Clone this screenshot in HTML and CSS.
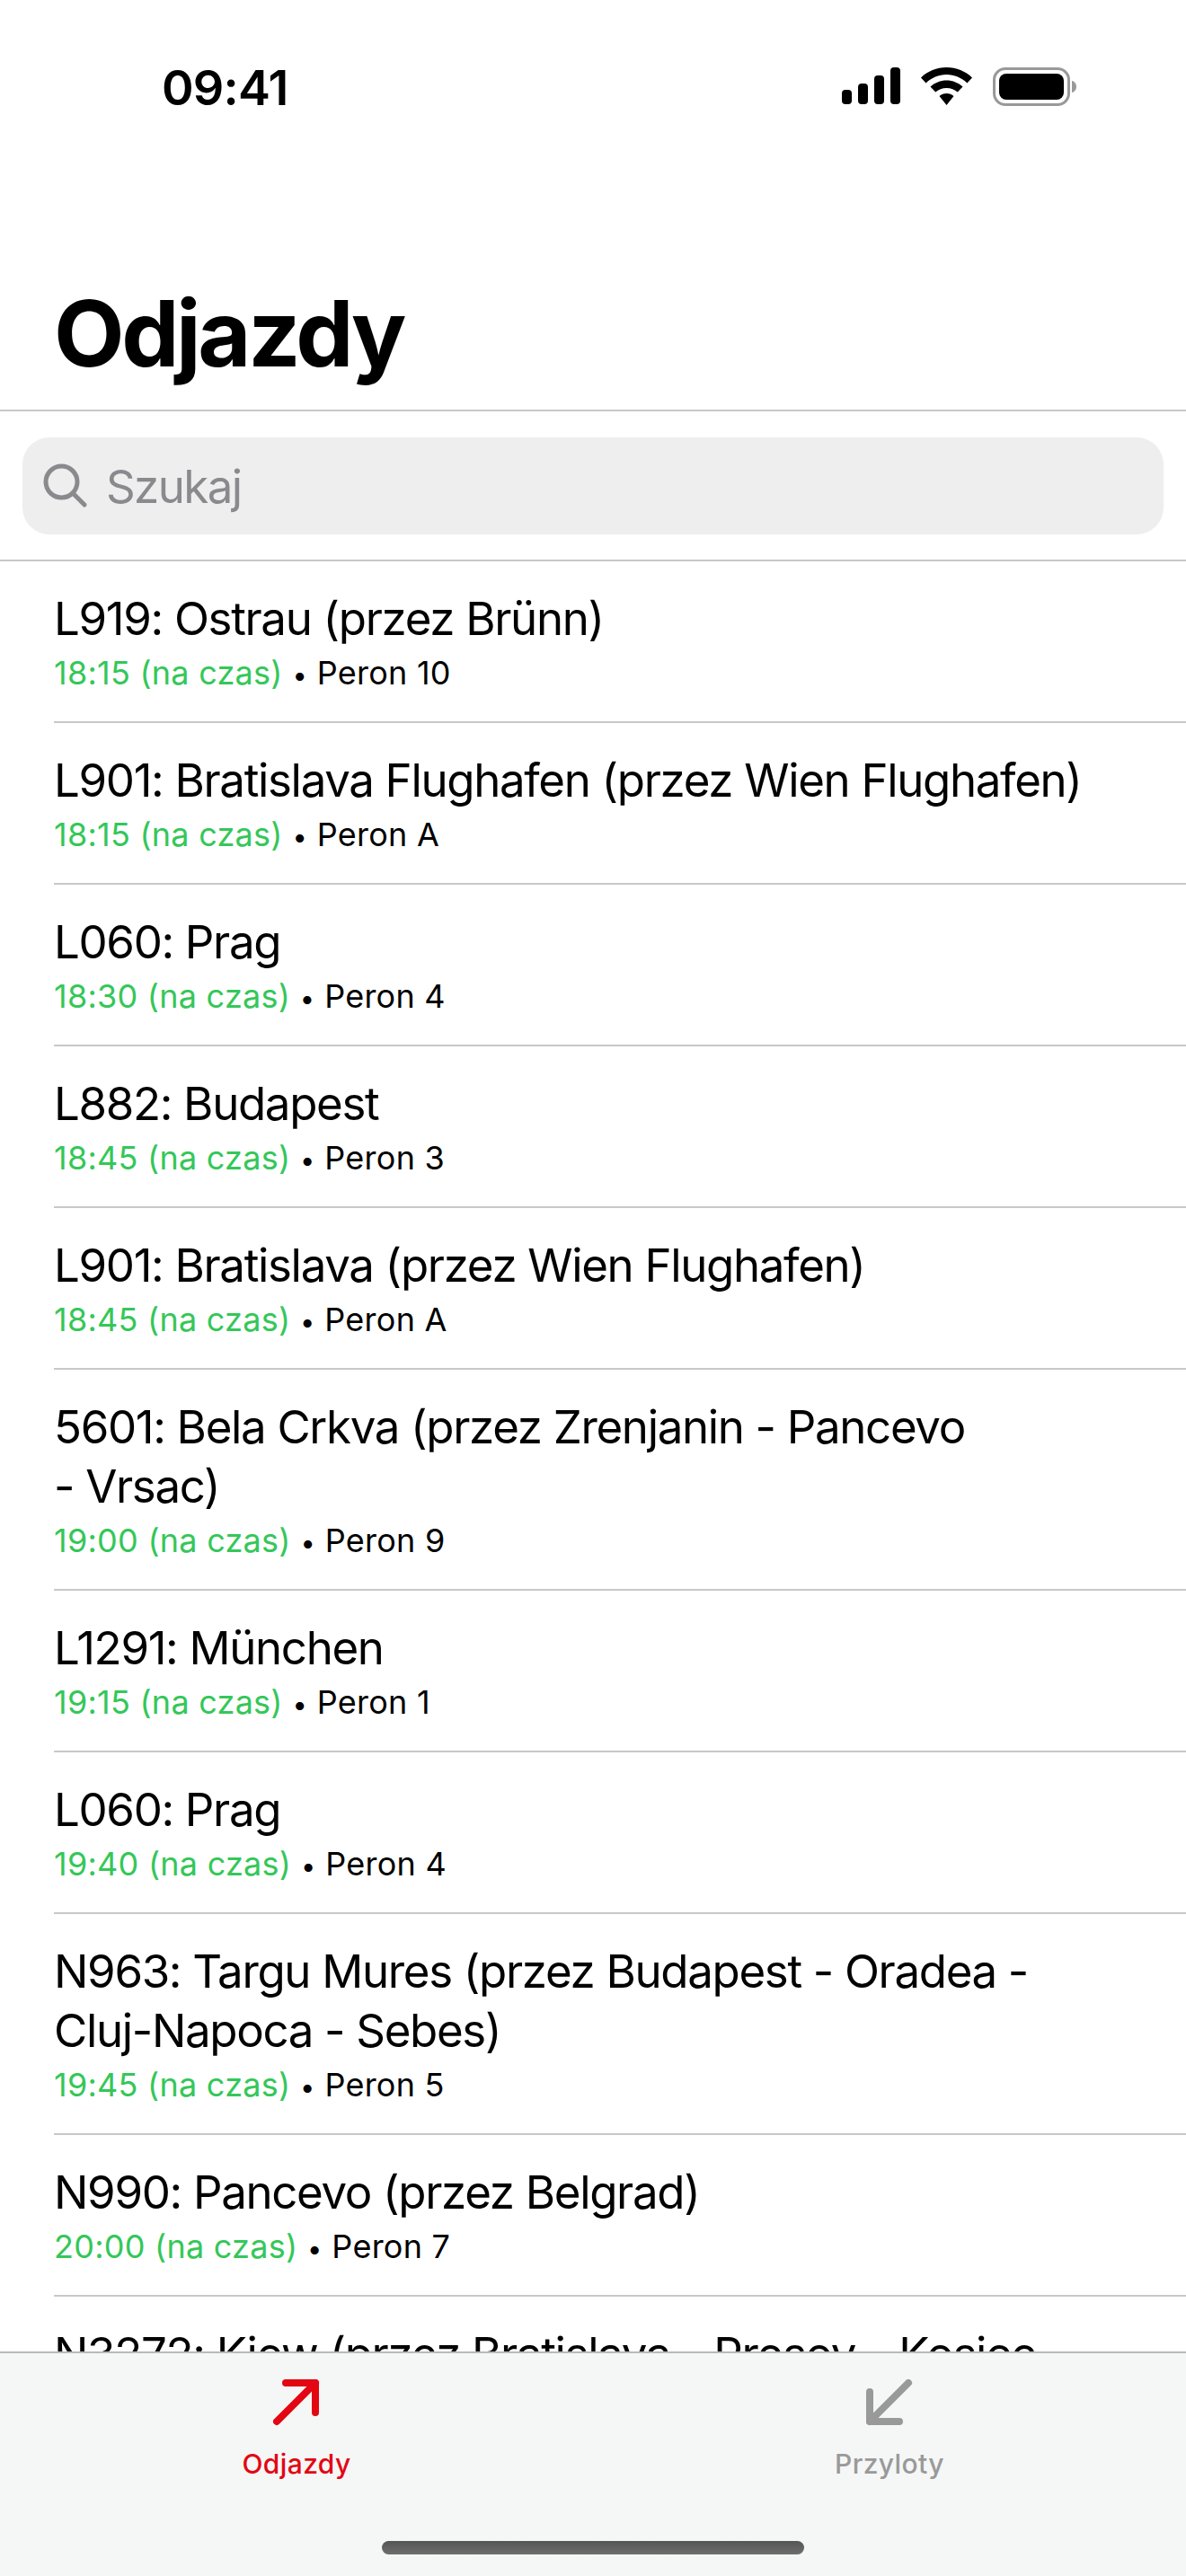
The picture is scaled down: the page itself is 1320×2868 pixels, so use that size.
FILE: index.html
```html
<!DOCTYPE html>
<html lang="pl">
<head>
<meta charset="utf-8">
<title>Odjazdy</title>
<link rel="stylesheet" href="styles.css">
</head>
<body>
<div class="app">
  <header class="status">
    <span class="clock">09:41</span>
    <div class="status-icons">
      <svg class="signal" width="65" height="41" viewBox="0 0 65 41"><rect x="0" y="25" width="11" height="16" rx="4"/><rect x="18" y="18" width="11" height="23" rx="4"/><rect x="36" y="9" width="11" height="32" rx="4"/><rect x="54" y="0" width="11" height="41" rx="4"/></svg>
      <svg class="wifi" width="57" height="42" viewBox="0 0 57 42"><path d="M28.5 0C17.5 0 7.5 4.3 0 11.4l5.6 6C11.7 11.6 19.7 8 28.5 8s16.8 3.6 22.9 9.4l5.6-6C49.5 4.3 39.5 0 28.5 0z"/><path d="M28.5 14.5c-6.9 0-13.200 2.700-18 7l5.700 6.100c3.200-2.900 7.500-4.700 12.300-4.700s9.100 1.800 12.300 4.700l5.700-6.100c-4.800-4.300-11.100-7-18-7z"/><path d="M28.500 29c-3.100 0-5.900 1.200-8 3.100L28.500 42l8-9.900c-2.100-1.900-4.900-3.100-8-3.100z"/></svg>
      <svg class="battery" width="93" height="43" viewBox="0 0 93 43"><rect x="1.500" y="1.500" width="83" height="40" rx="12.500" fill="none" stroke="#999" stroke-width="3"/><rect x="7" y="7" width="72" height="29" rx="8"/><path d="M88 15c3 .6 5 3.300 5 6.500s-2 5.900-5 6.500z" fill="#999"/></svg>
    </div>
  </header>
  <h1 class="title">Odjazdy</h1>
  <div class="search-wrap">
    <div class="search">
      <svg class="search-icon" width="50" height="50" viewBox="0 0 50 50" fill="none" stroke="#8a8a8e" stroke-width="5" stroke-linecap="round"><circle cx="20.500" cy="20.500" r="17.500"/><line x1="33" y1="33" x2="46" y2="46"/></svg>
      <span class="search-text">Szukaj</span>
    </div>
  </div>
  <main class="list">
    <div class="row"><div class="name">L919: Ostrau (przez Brünn)</div><div class="meta"><span class="time">18:15 (na czas)</span><span class="dot">•</span><span>Peron 10</span></div></div>
    <div class="row"><div class="name">L901: Bratislava Flughafen (przez Wien Flughafen)</div><div class="meta"><span class="time">18:15 (na czas)</span><span class="dot">•</span><span>Peron A</span></div></div>
    <div class="row"><div class="name">L060: Prag</div><div class="meta"><span class="time">18:30 (na czas)</span><span class="dot">•</span><span>Peron 4</span></div></div>
    <div class="row"><div class="name">L882: Budapest</div><div class="meta"><span class="time">18:45 (na czas)</span><span class="dot">•</span><span>Peron 3</span></div></div>
    <div class="row"><div class="name">L901: Bratislava (przez Wien Flughafen)</div><div class="meta"><span class="time">18:45 (na czas)</span><span class="dot">•</span><span>Peron A</span></div></div>
    <div class="row"><div class="name">5601: Bela Crkva (przez Zrenjanin - Pancevo<br>- Vrsac)</div><div class="meta"><span class="time">19:00 (na czas)</span><span class="dot">•</span><span>Peron 9</span></div></div>
    <div class="row"><div class="name">L1291: München</div><div class="meta"><span class="time">19:15 (na czas)</span><span class="dot">•</span><span>Peron 1</span></div></div>
    <div class="row"><div class="name">L060: Prag</div><div class="meta"><span class="time">19:40 (na czas)</span><span class="dot">•</span><span>Peron 4</span></div></div>
    <div class="row"><div class="name">N963: Targu Mures (przez Budapest - Oradea -<br>Cluj-Napoca - Sebes)</div><div class="meta"><span class="time">19:45 (na czas)</span><span class="dot">•</span><span>Peron 5</span></div></div>
    <div class="row"><div class="name">N990: Pancevo (przez Belgrad)</div><div class="meta"><span class="time">20:00 (na czas)</span><span class="dot">•</span><span>Peron 7</span></div></div>
    <div class="row"><div class="name">N3272: Kiew (przez Bratislava - Presov - Kosice</div></div>
  </main>
  <footer class="tabbar">
    <div class="tabs">
      <div class="tab tab-active">
        <svg width="52" height="52" viewBox="0 0 52 52" fill="none" stroke="currentColor" stroke-width="8" stroke-linecap="round" stroke-linejoin="round"><path d="M4 47L47 4"/><path d="M14 4H47V37"/></svg>
        <span class="tab-label">Odjazdy</span>
      </div>
      <div class="tab">
        <svg width="52" height="52" viewBox="0 0 52 52" fill="none" stroke="currentColor" stroke-width="8" stroke-linecap="round" stroke-linejoin="round"><path d="M47 4L4 47"/><path d="M4 14V47H37"/></svg>
        <span class="tab-label">Przyloty</span>
      </div>
    </div>
    <div class="home"></div>
  </footer>
</div>
</body>
</html>
```
FILE: styles.css
```css
* { box-sizing: border-box; margin: 0; padding: 0; }
html, body { background: #fff; }
body { font-family: Inter, "Liberation Sans", sans-serif; color: #000; }
.app { width: 1320px; height: 2868px; display: flex; flex-direction: column; overflow: hidden; }
.status { height: 196px; flex: none; padding: 75px 122px 0 180px; display: flex; justify-content: space-between; align-items: flex-start; }
.clock { font-size: 54px; font-weight: 600; line-height: 44px; letter-spacing: -0.8px; margin-top: 1px; }
.status-icons { display: flex; align-items: flex-start; gap: 23px; }
.title { flex: none; height: 262px; padding: 113px 0 0 60px; font-size: 102px; font-weight: 700; line-height: 124px; letter-spacing: -3.4px; border-bottom: 2px solid #c8c8ca; }
.search-wrap { flex: none; height: 167px; padding: 29px 25px 0; border-bottom: 2px solid #c8c8ca; }
.search { height: 108px; background: #eeeeef; border-radius: 30px; display: flex; align-items: center; padding-left: 23px; gap: 20px; }
.search-icon { flex: none; }
.search-text { font-size: 51px; color: #8a8a8e; letter-spacing: -1.6px; }
.list { flex: 1; min-height: 0; overflow: hidden; padding-left: 60px; }
.row { padding: 31px 0 32px; border-bottom: 2px solid #c8c8ca; }
.name { font-size: 51px; line-height: 66px; letter-spacing: -1.33px; }
.meta { font-size: 36px; height: 44px; line-height: 44px; display: flex; align-items: baseline; margin-top: 5px; letter-spacing: 0.25px; }
.time { color: #34c759; }
.dot { width: 38px; text-align: center; font-size: 29px; line-height: 29px; }
.tabbar { flex: none; height: 250px; background: #f5f6f6; border-top: 2px solid #b9b9bb; display: flex; flex-direction: column; }
.tabs { display: flex; padding-top: 29px; }
.tab { flex: 1; display: flex; flex-direction: column; align-items: center; color: #999; }
.tab-active { color: #e30613; }
.tab-label { font-size: 30px; font-weight: 500; line-height: 36px; margin-top: 24px; letter-spacing: 0.4px; }
.home { width: 470px; height: 15px; background: linear-gradient(#555, #6e6e6e); border-radius: 8px; margin: auto auto 24px; }
```
